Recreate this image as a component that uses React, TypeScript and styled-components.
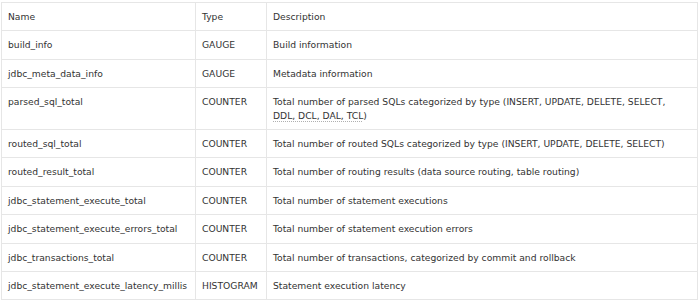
import styled, { createGlobalStyle } from 'styled-components';

const GlobalStyle = createGlobalStyle`
  body {
    margin: 0;
    background: #ffffff;
  }
`;

const Page = styled.div`
  padding: 2px 3px 0 1px;
  width: 700px;
  box-sizing: border-box;
`;

const Table = styled.table`
  width: 696px;
  border-collapse: collapse;
  table-layout: fixed;
  font-family: 'DejaVu Sans', Verdana, sans-serif;
  font-size: 9.2px;
  color: #333333;
`;

const Col = styled.col<{ $w: number }>`
  width: ${(p) => p.$w}px;
`;

const Cell = styled.td`
  border: 1px solid #e6e6e6;
  padding: 7px 6px 7px 6px;
  line-height: 13.4px;
  text-align: left;
  vertical-align: top;
  font-weight: normal;
`;

const HeadCell = styled(Cell).attrs({ as: 'th' })``;

const Abbr = styled.span`
  text-decoration: underline dotted #b0b0b0;
  text-underline-offset: 2px;
`;

const metrics = [
  { name: 'build_info', type: 'GAUGE', desc: 'Build information' },
  { name: 'jdbc_meta_data_info', type: 'GAUGE', desc: 'Metadata information' },
  {
    name: 'parsed_sql_total',
    type: 'COUNTER',
    desc: (
      <>
        Total number of parsed SQLs categorized by type (INSERT, UPDATE, DELETE, SELECT,
        <br />
        <Abbr>DDL, DCL, DAL, TCL</Abbr>)
      </>
    ),
  },
  {
    name: 'routed_sql_total',
    type: 'COUNTER',
    desc: 'Total number of routed SQLs categorized by type (INSERT, UPDATE, DELETE, SELECT)',
  },
  {
    name: 'routed_result_total',
    type: 'COUNTER',
    desc: 'Total number of routing results (data source routing, table routing)',
  },
  { name: 'jdbc_statement_execute_total', type: 'COUNTER', desc: 'Total number of statement executions' },
  {
    name: 'jdbc_statement_execute_errors_total',
    type: 'COUNTER',
    desc: 'Total number of statement execution errors',
  },
  {
    name: 'jdbc_transactions_total',
    type: 'COUNTER',
    desc: 'Total number of transactions, categorized by commit and rollback',
  },
  {
    name: 'jdbc_statement_execute_latency_millis',
    type: 'HISTOGRAM',
    desc: 'Statement execution latency',
  },
];

const App = () => {
  return (
    <Page>
      <GlobalStyle />
      <Table>
        <colgroup>
          <Col $w={194} />
          <Col $w={71} />
          <Col $w={431} />
        </colgroup>
        <thead>
          <tr>
            <HeadCell>Name</HeadCell>
            <HeadCell>Type</HeadCell>
            <HeadCell>Description</HeadCell>
          </tr>
        </thead>
        <tbody>
          {metrics.map((m) => (
            <tr key={m.name}>
              <Cell>{m.name}</Cell>
              <Cell>{m.type}</Cell>
              <Cell>{m.desc}</Cell>
            </tr>
          ))}
        </tbody>
      </Table>
    </Page>
  );
};

export default App;
